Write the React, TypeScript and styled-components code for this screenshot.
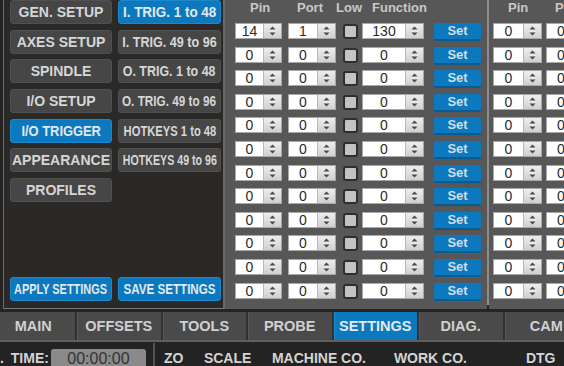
import React from 'react';
import styled, { createGlobalStyle } from 'styled-components';

const GlobalStyle = createGlobalStyle`
  html, body {
    margin: 0;
    padding: 0;
  }
  body {
    width: 564px;
    height: 366px;
    overflow: hidden;
    background: #262422;
    font-family: 'Liberation Sans', Arial, sans-serif;
  }
`;

const Screen = styled.div`
  width: 564px;
  height: 366px;
  overflow: hidden;
  display: flex;
  flex-direction: column;
  background: #262422;
`;

const Workspace = styled.div`
  display: flex;
  height: 310px;
  flex-shrink: 0;
`;

const SidePanel = styled.div`
  box-sizing: border-box;
  width: 222px;
  height: 309px;
  margin-left: 3px;
  padding: 0 0 7px 6px;
  display: flex;
  flex-direction: column;
  justify-content: space-between;
  flex-shrink: 0;
  background: #2b2927;
  border-left: 1px solid #6c6c6c;
  border-right: 2px solid #686868;
  border-bottom: 1px solid #787878;
`;

const ButtonGrid = styled.div`
  display: grid;
  grid-template-columns: 102px 103px;
  grid-auto-rows: 24px;
  column-gap: 6px;
  row-gap: 5.7px;
`;

const MenuButton = styled.div<{ $active?: boolean }>`
  box-sizing: border-box;
  display: flex;
  align-items: center;
  justify-content: center;
  border-radius: 3px;
  background: ${(p) => (p.$active ? '#0c78bd' : '#464646')};
  border: 1px solid ${(p) => (p.$active ? '#1a88cc' : '#505050')};
  color: ${(p) => (p.$active ? '#e2e8ec' : '#d6d6d6')};
  font-size: 14px;
  font-weight: bold;
  line-height: 22px;
  overflow: hidden;
`;

const Squeeze = styled.span<{ $x: number }>`
  display: inline-block;
  white-space: nowrap;
  transform: scaleX(${(p) => p.$x});
`;

const ActionRow = styled.div`
  display: grid;
  grid-template-columns: 102px 103px;
  height: 24px;
  column-gap: 6px;
`;

const IoPanel = styled.div<{ $pad: number }>`
  box-sizing: border-box;
  height: 309px;
  padding-left: ${(p) => p.$pad}px;
  background: #575757;
  overflow: hidden;
`;

const MainIo = styled(IoPanel)`
  width: 262px;
  flex-shrink: 0;
`;

const SideIo = styled(IoPanel)`
  flex: 1;
  min-width: 0;
`;

const Divider = styled.div`
  width: 2px;
  height: 305px;
  background: #8c8c8c;
  flex-shrink: 0;
`;

const HeaderRow = styled.div`
  display: grid;
  grid-template-columns: 47px 39px 36px 80px;
  height: 23px;
  padding-left: 15px;
  color: #c8c8c8;
  font-size: 13px;
  font-weight: bold;
  line-height: 15px;
  white-space: nowrap;
`;

const TriggerRows = styled.div`
  display: grid;
  grid-template-columns: 53px 55px 19px 72px 47px;
  grid-auto-rows: 16px;
  row-gap: 7.6px;
  width: 246px;
`;

const SpinBox = styled.div<{ $w: number }>`
  box-sizing: border-box;
  width: ${(p) => p.$w}px;
  height: 16px;
  display: flex;
  border: 1px solid #a8a8a8;
  background: #ffffff;
`;

const SpinValue = styled.div`
  flex: 1;
  text-align: center;
  color: #2a2a2a;
  font-size: 14px;
  line-height: 14px;
`;

const SpinArrows = styled.div`
  width: 17px;
  display: flex;
  align-items: center;
  justify-content: center;
  border-left: 1px solid #b8b8b8;
  background: linear-gradient(#ededed, #d0d0d0);
`;

const LowBox = styled.div`
  box-sizing: border-box;
  width: 15px;
  height: 15px;
  margin-top: 1px;
  border: 2px solid #2e2e2e;
  border-radius: 3px;
  background: #c3c3c3;
`;

const SetButton = styled.div`
  box-sizing: border-box;
  width: 47px;
  height: 18px;
  border-radius: 2px;
  background: #0c78bd;
  border-bottom: 2px solid #085b90;
  color: #d3dde6;
  font-size: 13px;
  font-weight: bold;
  line-height: 16px;
  text-align: center;
`;

const TabStrip = styled.div`
  height: 28px;
  margin-top: 2px;
  border-bottom: 2px solid #5f5f5f;
  background: #484848;
  overflow: hidden;
  flex-shrink: 0;
`;

const TabTrack = styled.div`
  display: flex;
  margin-left: -8.5px;
`;

const Tab = styled.div<{ $active?: boolean }>`
  box-sizing: border-box;
  width: 85.5px;
  height: 28px;
  flex-shrink: 0;
  background: ${(p) => (p.$active ? '#0c78bd' : '#4a4a4a')};
  border-right: 2px solid #303030;
  box-shadow: inset 1px 0 0 ${(p) => (p.$active ? '#1f8bd0' : '#585858')};
  color: ${(p) => (p.$active ? '#e4eaee' : '#d0d0d0')};
  font-size: 14.5px;
  font-weight: bold;
  line-height: 29px;
  text-align: center;
  white-space: nowrap;
`;

const StatusBar = styled.div`
  flex: 1;
  margin-top: 1px;
  display: flex;
  align-items: flex-start;
  background: #232323;
  overflow: hidden;
`;

const StatusLabel = styled.div<{ $shift?: number }>`
  flex-shrink: 0;
  padding-top: 7px;
  margin-left: ${(p) => p.$shift ?? 0}px;
  color: #d4d4d4;
  font-size: 14px;
  font-weight: bold;
  line-height: 16px;
  white-space: nowrap;
`;

const TimeBox = styled.div`
  flex-shrink: 0;
  width: 95px;
  height: 20px;
  margin: 6px 0 0 2px;
  border-radius: 3px;
  background: #8a8a8a;
  color: #333333;
  font-size: 16px;
  line-height: 20px;
  text-align: center;
`;

const StatusDivider = styled.div`
  flex-shrink: 0;
  width: 2px;
  align-self: stretch;
  margin-left: 7px;
  background: #555555;
`;

const Readouts = styled.div`
  flex-shrink: 0;
  display: grid;
  grid-template-columns: 40px 68px 122px 132px 60px;
  padding-left: 9px;
`;

const Arrows = () => (
  <svg width="9" height="12" viewBox="0 0 9 12">
    <polygon points="1.5,4.5 4.5,1.5 7.5,4.5" fill="#4a4a4a" />
    <line x1="1" y1="6" x2="8" y2="6" stroke="#f4f4f4" strokeWidth="1" />
    <polygon points="1.5,7.5 4.5,10.5 7.5,7.5" fill="#4a4a4a" />
  </svg>
);

const Spinner = ({ value, width }: { value: number; width: number }) => (
  <SpinBox $w={width}>
    <SpinValue>{value}</SpinValue>
    <SpinArrows>
      <Arrows />
    </SpinArrows>
  </SpinBox>
);

const setupMenu = [
  { left: 'GEN. SETUP', right: 'I. TRIG. 1 to 48', rx: 0.96, activeRight: true },
  { left: 'AXES SETUP', right: 'I. TRIG. 49 to 96', rx: 0.9 },
  { left: 'SPINDLE', right: 'O. TRIG. 1 to 48', rx: 0.89 },
  { left: 'I/O SETUP', right: 'O. TRIG. 49 to 96', rx: 0.84 },
  { left: 'I/O TRIGGER', right: 'HOTKEYS 1 to 48', rx: 0.8, lx: 0.92, activeLeft: true },
  { left: 'APPEARANCE', right: 'HOTKEYS 49 to 96', rx: 0.76 },
  { left: 'PROFILES' },
];

type Trigger = { pin: number; port: number; fn: number };

const firstBank: Trigger[] = Array.from({ length: 12 }, (_, i) =>
  i === 0 ? { pin: 14, port: 1, fn: 130 } : { pin: 0, port: 0, fn: 0 },
);

const secondBank: Trigger[] = Array.from({ length: 12 }, () => ({ pin: 0, port: 0, fn: 0 }));

const tabs = ['MAIN', 'OFFSETS', 'TOOLS', 'PROBE', 'SETTINGS', 'DIAG.', 'CAM'];

const TriggerTable = ({ rows, pinWidth }: { rows: Trigger[]; pinWidth: number }) => (
  <>
    <HeaderRow>
      <span>Pin</span>
      <span>Port</span>
      <span>Low</span>
      <span>Function</span>
    </HeaderRow>
    <TriggerRows>
      {rows.map((t, i) => (
        <React.Fragment key={i}>
          <Spinner value={t.pin} width={pinWidth} />
          <Spinner value={t.port} width={48} />
          <LowBox />
          <Spinner value={t.fn} width={62} />
          <SetButton>Set</SetButton>
        </React.Fragment>
      ))}
    </TriggerRows>
  </>
);

export default function App() {
  return (
    <Screen>
      <GlobalStyle />
      <Workspace>
        <SidePanel>
          <ButtonGrid>
            {setupMenu.map((m) => (
              <React.Fragment key={m.left}>
                <MenuButton $active={m.activeLeft}>
                  <Squeeze $x={m.lx ?? 1}>{m.left}</Squeeze>
                </MenuButton>
                {m.right ? (
                  <MenuButton $active={m.activeRight}>
                    <Squeeze $x={m.rx ?? 1}>{m.right}</Squeeze>
                  </MenuButton>
                ) : (
                  <span />
                )}
              </React.Fragment>
            ))}
          </ButtonGrid>
          <ActionRow>
            <MenuButton $active>
              <Squeeze $x={0.78}>APPLY SETTINGS</Squeeze>
            </MenuButton>
            <MenuButton $active>
              <Squeeze $x={0.83}>SAVE SETTINGS</Squeeze>
            </MenuButton>
          </ActionRow>
        </SidePanel>
        <MainIo $pad={10}>
          <TriggerTable rows={firstBank} pinWidth={47} />
        </MainIo>
        <Divider />
        <SideIo $pad={4}>
          <TriggerTable rows={secondBank} pinWidth={49} />
        </SideIo>
      </Workspace>
      <TabStrip>
        <TabTrack>
          {tabs.map((t) => (
            <Tab key={t} $active={t === 'SETTINGS'}>
              {t}
            </Tab>
          ))}
        </TabTrack>
      </TabStrip>
      <StatusBar>
        <StatusLabel $shift={-18}>EL.</StatusLabel>
        <StatusLabel $shift={7}>TIME:</StatusLabel>
        <TimeBox>00:00:00</TimeBox>
        <StatusDivider />
        <Readouts>
          <StatusLabel>ZO</StatusLabel>
          <StatusLabel>SCALE</StatusLabel>
          <StatusLabel>MACHINE CO.</StatusLabel>
          <StatusLabel>WORK CO.</StatusLabel>
          <StatusLabel>DTG</StatusLabel>
        </Readouts>
      </StatusBar>
    </Screen>
  );
}
